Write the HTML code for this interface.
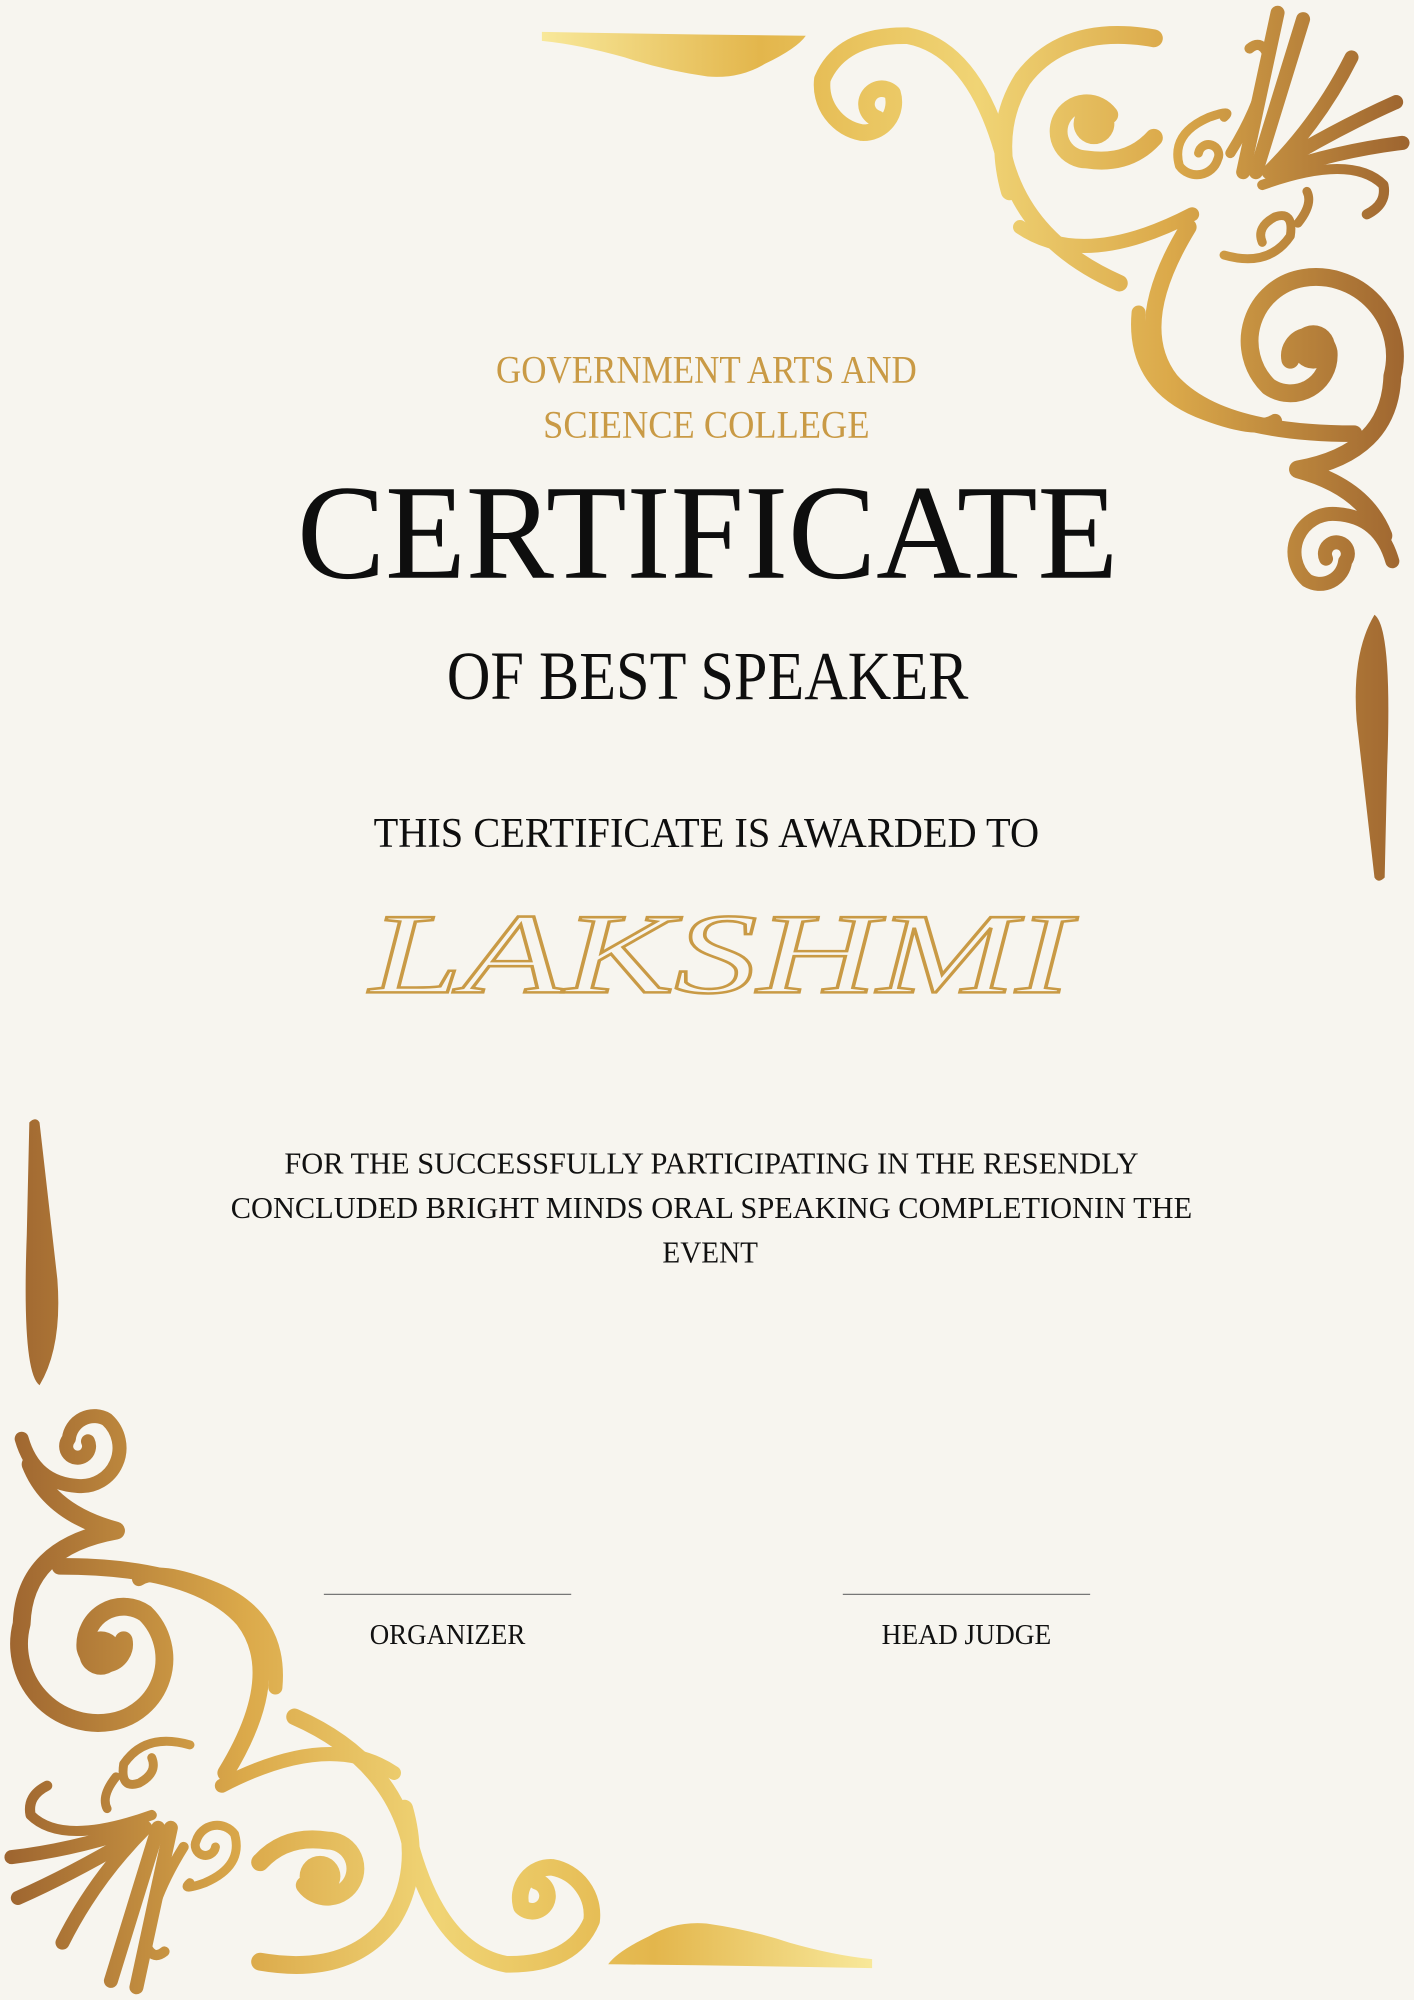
<!DOCTYPE html>
<html><head><meta charset="utf-8"><style>
html,body{margin:0;padding:0;background:#f7f5ef;}
svg{display:block}
</style></head><body>
<svg width="1414" height="2000" viewBox="0 0 1109 1568" preserveAspectRatio="none" xmlns="http://www.w3.org/2000/svg">
<defs>
<linearGradient id="g" gradientUnits="userSpaceOnUse" x1="425" y1="0" x2="1109" y2="0">
<stop offset="0" stop-color="#f8e89a"/>
<stop offset="0.25" stop-color="#e3b64c"/>
<stop offset="0.5" stop-color="#f0d475"/>
<stop offset="0.72" stop-color="#dba94a"/>
<stop offset="1" stop-color="#9c632f"/>
</linearGradient>
<g id="corner" fill="none" stroke="url(#g)" stroke-linecap="round" stroke-linejoin="round">
<path d="M425,25 Q530,27 632,28 Q625,38 600,50 Q580,62 555,60 Q520,55 490,45 Q455,35 425,32 Z" fill="url(#g)" stroke="none"/>
<path d="M688,93 A12,12 0 1 1 700,73 A24,24 0 0 1 676,104 A38,38 0 0 1 645,62 Q660,27 712,28 Q765,38 788,125 Q805,190 878,222" stroke-width="13"/>
<path d="M905,30 Q835,18 802,62 Q778,100 792,150" stroke-width="14"/>
<path d="M870,90 A22,22 0 1 0 852,125 Q885,130 905,108" stroke-width="14"/>
<circle cx="858" cy="97" r="16" fill="url(#g)" stroke="none"/>
<path d="M800,178 Q850,212 935,168" stroke-width="11"/>
<path d="M932,178 Q885,255 918,298 Q955,340 1062,340" stroke-width="13"/>
<path d="M1012,282 A15,15 0 1 1 1042,276 A30,30 0 0 1 995,303 A50,50 0 0 1 1022,218 A62,62 0 0 1 1092,295 Q1090,355 1018,368 Q1070,382 1085,420" stroke-width="14"/>
<circle cx="1030" cy="272" r="17" fill="url(#g)" stroke="none"/>
<path d="M1040,438 A9,9 0 1 1 1055,440 A20,20 0 0 1 1025,455 A30,30 0 0 1 1048,403 Q1082,405 1092,440" stroke-width="11"/>
<path d="M893,245 Q888,300 940,322 Q985,340 1000,330" stroke-width="11"/>
<path d="M1078,482 Q1092,492 1088,600 L1086,688 Q1081,693 1078,688 L1064,565 Q1060,512 1078,482 Z" fill="url(#g)" stroke="none"/>
<g stroke-width="11">
<path d="M975,135 L1002,10"/>
<path d="M985,135 L1022,15"/>
<path d="M995,135 Q1035,95 1060,45"/>
<path d="M1000,130 Q1050,100 1095,80"/>
<path d="M1000,135 Q1050,118 1100,112"/>
<path d="M990,145 Q1060,120 1085,145 Q1088,160 1072,168" stroke-width="8"/>
<path d="M965,120 Q990,80 995,45 Q990,30 980,38" stroke-width="8"/>
<path d="M940,120 A8,8 0 1 1 955,125 A17,17 0 0 1 925,130 Q918,105 948,92 Q968,85 960,92" stroke-width="7"/>
<path d="M960,200 Q995,210 1012,185 Q1015,165 1000,170 Q985,178 990,190 M1018,175 Q1030,160 1025,150" stroke-width="7"/>
</g>
</g>
</defs>
<rect width="1109" height="1568" fill="#f7f5ef"/>
<use href="#corner"/>
<use href="#corner" transform="rotate(180 554.5 784)"/>
<g font-family="'Liberation Serif',serif" text-anchor="middle">
<text x="554" y="300" font-size="31" fill="#c99a45" textLength="330" lengthAdjust="spacingAndGlyphs">GOVERNMENT ARTS AND</text>
<text x="554" y="343" font-size="31" fill="#c99a45" textLength="256" lengthAdjust="spacingAndGlyphs">SCIENCE COLLEGE</text>
<text x="555" y="453" font-size="106" fill="#0e0e0e" textLength="644" lengthAdjust="spacingAndGlyphs">CERTIFICATE</text>
<text x="555" y="548" font-size="54" fill="#0e0e0e" textLength="409" lengthAdjust="spacingAndGlyphs">OF BEST SPEAKER</text>
<text x="554" y="664" font-size="33" fill="#0e0e0e" textLength="522" lengthAdjust="spacingAndGlyphs">THIS CERTIFICATE IS AWARDED TO</text>
<text x="565" y="778" font-size="90" font-style="italic" fill="none" stroke="#c99a45" stroke-width="2" textLength="550" lengthAdjust="spacingAndGlyphs">LAKSHMI</text>
<text x="558" y="920" font-size="24" fill="#111" textLength="670" lengthAdjust="spacingAndGlyphs">FOR THE SUCCESSFULLY PARTICIPATING IN THE RESENDLY</text>
<text x="558" y="955" font-size="24" fill="#111" textLength="754" lengthAdjust="spacingAndGlyphs">CONCLUDED BRIGHT MINDS ORAL SPEAKING COMPLETIONIN THE</text>
<text x="557" y="990" font-size="24" fill="#111" textLength="75" lengthAdjust="spacingAndGlyphs">EVENT</text>
<text x="351" y="1289" font-size="22" fill="#111" textLength="122" lengthAdjust="spacingAndGlyphs">ORGANIZER</text>
<text x="758" y="1289" font-size="22" fill="#111" textLength="133" lengthAdjust="spacingAndGlyphs">HEAD JUDGE</text>
</g>
<line x1="254" y1="1250" x2="448" y2="1250" stroke="#777" stroke-width="1"/>
<line x1="661" y1="1250" x2="855" y2="1250" stroke="#777" stroke-width="1"/>
</svg>
</body></html>
